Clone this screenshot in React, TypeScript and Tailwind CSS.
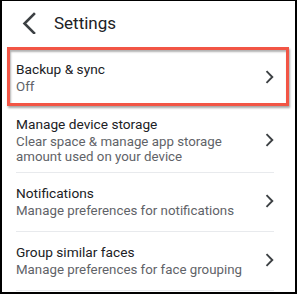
import React from 'react';

type Row = {
  title: string;
  lines: string[];
  pad: string;
  highlight?: boolean;
};

const rows: Row[] = [
  { title: 'Backup & sync', lines: ['Off'], pad: 'pt-[11px] pb-[10px]', highlight: true },
  {
    title: 'Manage device storage',
    lines: ['Clear space & manage app storage', 'amount used on your device'],
    pad: 'pt-[10px] pb-[8px]',
  },
  { title: 'Notifications', lines: ['Manage preferences for notifications'], pad: 'pt-[11px] pb-[13px]' },
  { title: 'Group similar faces', lines: ['Manage preferences for face grouping'], pad: 'pt-[11px] pb-[13px]' },
];

function BackIcon() {
  return (
    <svg width="16" height="22" viewBox="0 0 16 22" fill="none" className="shrink-0">
      <path d="M13 2 L3.5 11.5 L13 21" stroke="#3c4043" strokeWidth="2.6" strokeLinecap="square" />
    </svg>
  );
}

function ChevronRight() {
  return (
    <svg width="9" height="14" viewBox="0 0 9 14" fill="none" className="shrink-0">
      <path d="M1.5 1.2 L7.3 7 L1.5 12.8" stroke="#3c4043" strokeWidth="1.9" />
    </svg>
  );
}

export default function App() {
  return (
    <div
      className="w-[297px] h-[294px] bg-white border-black border-t border-x-2 border-b-2 overflow-hidden"
      style={{ fontFamily: 'Roboto, "Noto Sans", sans-serif' }}
    >
      <div className="h-[48px] flex items-center pl-[19px] pb-[4px]">
        <BackIcon />
        <span className="ml-[17px] text-[17px] leading-[20px] text-[#202124]">Settings</span>
      </div>

      {rows.map((r) => (
        <div key={r.title} className="relative pl-[14px] pr-[21px]">
          <div className={`flex items-center border-b border-[#e8eaed] ${r.pad}`}>
            <div className="flex-1 min-w-0">
              <div className="text-[13.7px] leading-[19px] text-[#202124]">{r.title}</div>
              {r.lines.map((l) => (
                <div key={l} className="text-[13.3px] leading-[15px] text-[#5f6368]">
                  {l}
                </div>
              ))}
            </div>
            <ChevronRight />
          </div>
          {r.highlight && (
            <div className="absolute left-[5px] right-[6px] top-[-2px] bottom-[-1px] border-[3px] border-[#f25545] shadow-[1px_2px_2px_rgba(0,0,0,0.35),inset_1px_2px_2px_rgba(0,0,0,0.3)]" />
          )}
        </div>
      ))}
    </div>
  );
}
